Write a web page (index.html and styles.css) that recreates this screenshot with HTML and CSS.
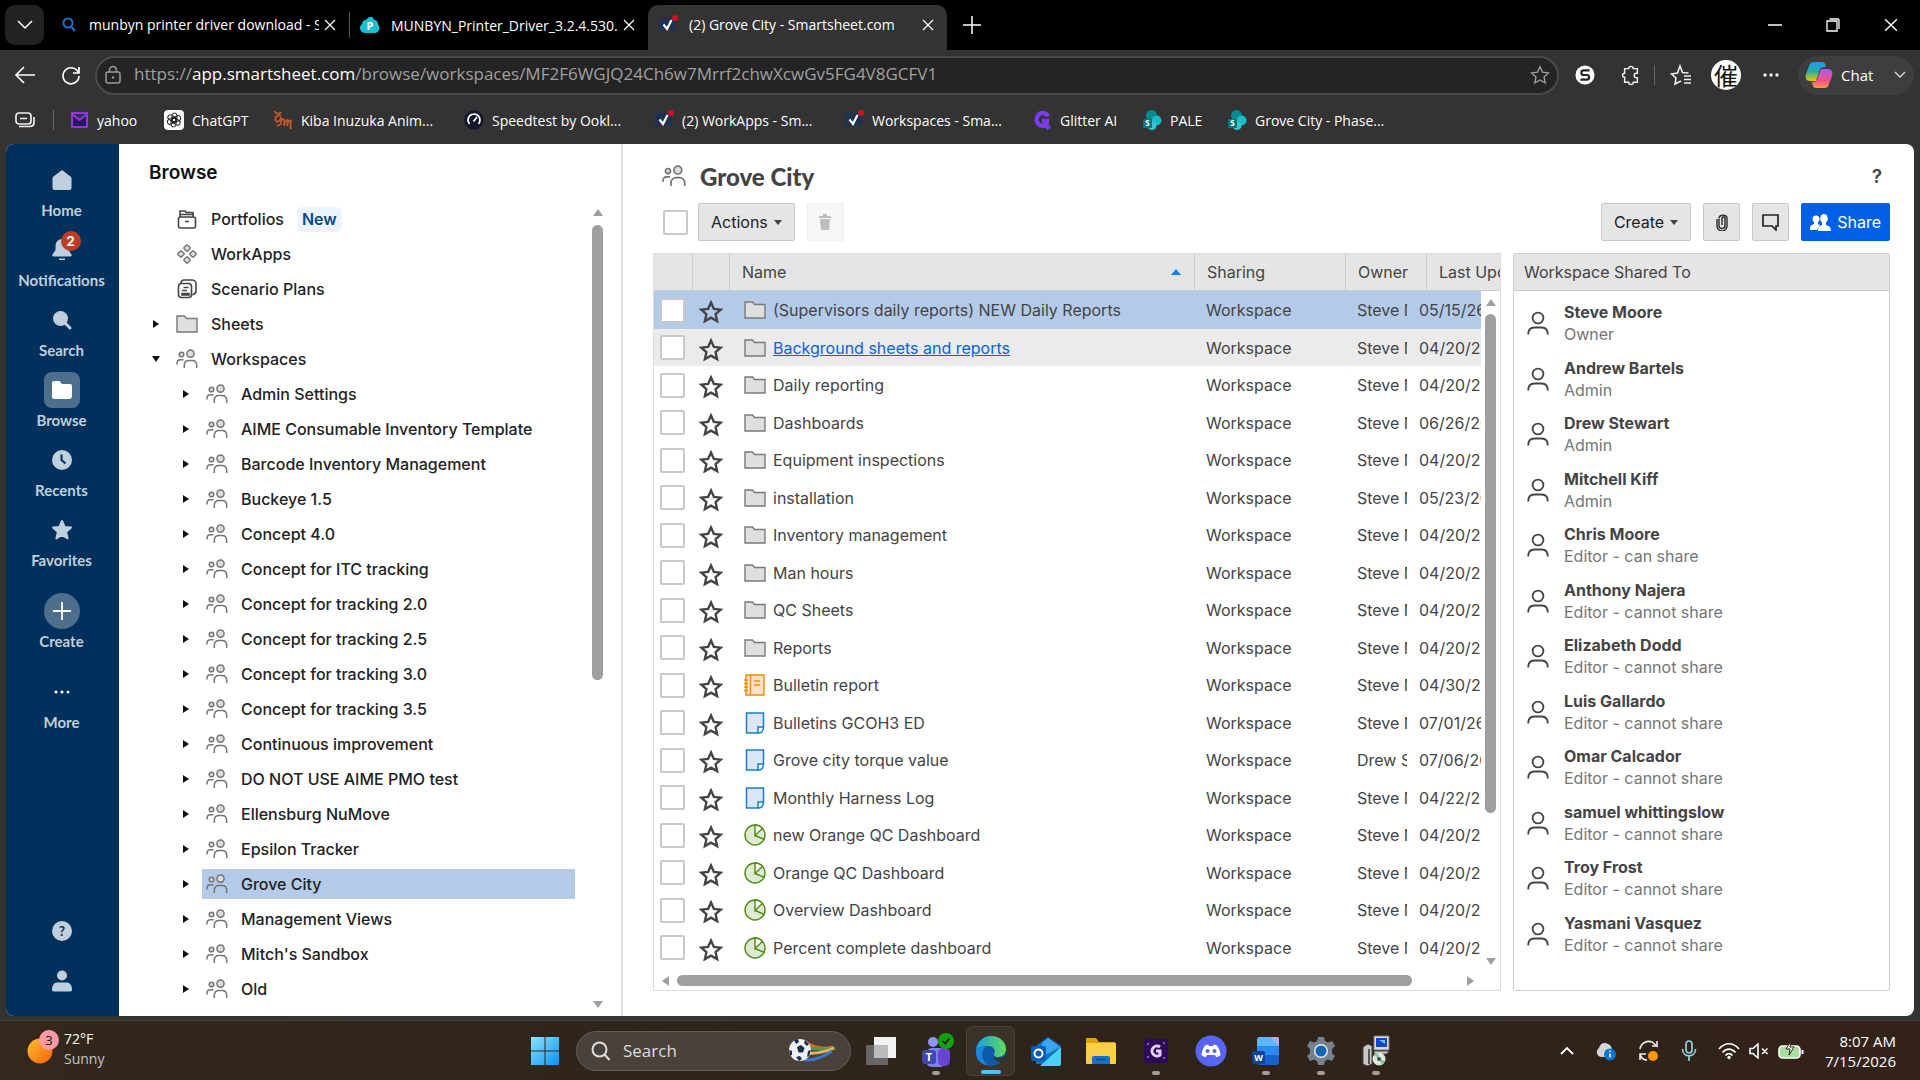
FILE: index.html
```html
<!DOCTYPE html>
<html lang="en">
<head>
  <meta charset="UTF-8" />
  <meta name="viewport" content="width=device-width, initial-scale=1" />
  <title>Grove City - Smartsheet.com</title>
  <link rel="stylesheet" href="styles.css">
</head>
<body>

  <!-- Shared icons -->
  <svg class="sprite" aria-hidden="true">
    <symbol id="i-people" viewBox="0 0 22 20">
      <g fill="#dcdcdc" stroke="#757575" stroke-width="1.5">
        <circle cx="5.5" cy="5.5" r="2.3"/><circle cx="14.5" cy="4.6" r="3.6"/>
        <path fill="none" d="M1 15.5v-1.200c0-2 1.500-3.500 3.500-3.500h3M8.300 19v-2.500c0-3 2-5 4.700-5h3c2.700 0 4.700 2 4.700 5V19"/>
      </g>
    </symbol>
    <symbol id="i-folder" viewBox="0 0 22 18">
      <path fill="#dfdfdf" stroke="#7a7a7a" stroke-width="1.4" d="M1 1h7.500l2 2.500H21V17H1z"/>
    </symbol>
    <symbol id="i-star" viewBox="0 0 24 24">
      <path fill="none" stroke="currentColor" stroke-width="2.400" d="M12 2.500l2.900 6.400 6.800.7-5.100 4.600 1.500 6.900L12 17.600l-6.100 3.500 1.500-6.900-5.100-4.600 6.800-.7z"/>
    </symbol>
    <symbol id="i-report" viewBox="0 0 22 22">
      <path fill="#fde3c3" stroke="#ee8a12" stroke-width="1.400" d="M2 1h18v20H2zM6.500 1v20"/>
      <path stroke="#ee8a12" stroke-width="1.400" d="M0 6h4M0 9.500h4M0 13h4M0 16.500h4M10 7h6M10 11h6"/>
    </symbol>
    <symbol id="i-sheet" viewBox="0 0 22 22">
      <path fill="#dbe6fb" stroke="#1780c8" stroke-width="1.500" d="M2.500 1h17v14l-5.500 6H2.500z"/>
      <path fill="#fff" stroke="#1780c8" stroke-width="1.500" d="M19.500 15h-5.500v6c3.500 0 5.500-2.500 5.500-6z"/>
    </symbol>
    <symbol id="i-dash" viewBox="0 0 22 22">
      <circle cx="11" cy="11" r="10" fill="#dfead3" stroke="#4b8a12" stroke-width="1.400"/>
      <path fill="#fff" stroke="#4b8a12" stroke-width="1.400" d="M11 1v10.500l7.500-7A10 10 0 0 0 11 1zM11 11.500l9.500 4"/>
    </symbol>
    <symbol id="i-user" viewBox="0 0 22 24">
      <g fill="none" stroke="#444" stroke-width="1.800"><circle cx="11" cy="7" r="5.400"/><path d="M1.200 23.500c0-4.500 2.300-7 6-7h7.600c3.700 0 6 2.500 6 7"/></g>
    </symbol>
    <symbol id="i-x" viewBox="0 0 12 12"><path fill="none" stroke="#fff" stroke-width="1.200" d="M1 1l10 10M11 1L1 11"/></symbol>
    <symbol id="i-smart" viewBox="0 0 20 20">
      <path fill="#1f3050" d="M1 3h17v14l-2-2H5l-4 5z"/>
      <path fill="none" stroke="#fff" stroke-width="2.200" d="M5.500 9.500l3.500 4.500 4.500-9"/><circle cx="17" cy="3" r="3" fill="#d0111f"/>
    </symbol>
    <symbol id="i-sp" viewBox="0 0 20 20">
      <circle cx="9.500" cy="5.500" r="5.500" fill="#078a92"/><circle cx="14.500" cy="10.500" r="5" fill="#1bbac4"/><circle cx="10" cy="15.500" r="4.500" fill="#37c6d0"/>
      <rect x="1" y="9" width="9" height="9" rx="1" fill="#04777f"/><text x="5.500" y="16" font-size="8" font-weight="700" fill="#fff" text-anchor="middle">S</text>
    </symbol>
  </svg>

  <!-- Browser tabs -->
  <header class="tabstrip">
    <button class="tab-menu" aria-label="Tab actions"><svg width="16" height="10" viewBox="0 0 16 10"><path fill="none" stroke="#fff" stroke-width="1.500" d="M1 1l7 7 7-7"/></svg></button>
    <div class="tab">
      <svg width="18" height="18" viewBox="0 0 18 18"><g fill="none" stroke="#1b76d2" stroke-width="2"><circle cx="8" cy="7" r="4.500"/><path d="M11 10.500l4 4.500"/></g></svg>
      <span class="tab-title">munbyn printer driver download - Search</span>
      <button class="tab-close" aria-label="Close tab"><svg width="12" height="12"><use href="#i-x"/></svg></button>
    </div>
    <div class="tab divided">
      <svg width="20" height="18" viewBox="0 0 20 18"><path fill="#18bfd0" d="M5 17a5 5 0 0 1-3-9C2 4 6 4 7 3c3-4 7-2 7 1 3 0 4 2 4 4 3 4 1 9-4 9z"/><text x="10" y="14" font-size="11" font-weight="700" fill="#fff" text-anchor="middle">P</text></svg>
      <span class="tab-title">MUNBYN_Printer_Driver_3.2.4.530.exe</span>
      <button class="tab-close" aria-label="Close tab"><svg width="12" height="12"><use href="#i-x"/></svg></button>
    </div>
    <div class="tab active">
      <svg width="20" height="20"><use href="#i-smart"/></svg>
      <span class="tab-title">(2) Grove City - Smartsheet.com</span>
      <button class="tab-close" aria-label="Close tab"><svg width="12" height="12"><use href="#i-x"/></svg></button>
    </div>
    <button class="tab-new" aria-label="New tab"><svg width="20" height="20" viewBox="0 0 20 20"><path stroke="#fff" stroke-width="1.500" d="M10 1v18M1 10h18"/></svg></button>
    <div class="win-controls">
      <button aria-label="Minimize"><svg width="14" height="14" viewBox="0 0 14 14"><path stroke="#fff" stroke-width="1.500" d="M0 7h14"/></svg></button>
      <button aria-label="Restore"><svg width="14" height="14" viewBox="0 0 14 14"><path fill="none" stroke="#fff" stroke-width="1.300" d="M1 3h10v10H1zM3.500 1H12q1 0 1 1v9"/></svg></button>
      <button aria-label="Close"><svg width="14" height="14" viewBox="0 0 12 12"><use href="#i-x"/></svg></button>
    </div>
  </header>

  <!-- Address bar -->
  <div class="toolbar">
    <button class="nav-btn" aria-label="Back"><svg width="22" height="18" viewBox="0 0 22 18"><path fill="none" stroke="#fff" stroke-width="1.700" d="M10 1L2 9l8 8M2 9h19"/></svg></button>
    <button class="nav-btn" aria-label="Refresh"><svg width="20" height="20" viewBox="0 0 20 20"><path fill="none" stroke="#fff" stroke-width="1.700" d="M17.500 8A8 8 0 1 0 18 11M18 2v6h-6"/></svg></button>
    <div class="address">
      <svg width="18" height="20" viewBox="0 0 18 20"><g fill="none" stroke="#9b9b9b" stroke-width="1.500"><rect x="2" y="7" width="14" height="11" rx="2"/><path d="M5.500 7V5a3.500 3.500 0 0 1 7 0v2"/></g><circle cx="9" cy="12.500" r="1.200" fill="#9b9b9b"/></svg>
      <span class="url">https://<b>app.smartsheet.com</b>/browse/workspaces/MF2F6WGJQ24Ch6w7Mrrf2chwXcwGv5FG4V8GCFV1</span>
      <svg width="20" height="20" viewBox="0 0 24 24"><path fill="none" stroke="currentColor" stroke-width="1.600" d="M12 2l3 6.700 7.200.8-5.400 4.900 1.500 7.200L12 18l-6.300 3.600 1.500-7.200-5.400-4.900L9 8.700z"/></svg>
    </div>
    <div class="ext">
      <button aria-label="Extension"><svg width="20" height="20" viewBox="0 0 22 22"><circle cx="11" cy="11" r="10.500" fill="#fff"/><path fill="none" stroke="#222" stroke-width="2.400" d="M16 6H9.500a2.500 2.500 0 0 0 0 5h3.500a2.500 2.500 0 0 1 0 5H6"/></svg></button>
      <button aria-label="Extensions"><svg width="20" height="20" viewBox="0 0 22 22"><path fill="none" stroke="#eee" stroke-width="1.600" d="M4 4h4.500a2.500 2.500 0 0 1 5 0H18v5h-1a2.200 2.200 0 0 0 0 5h1v5h-4.500a2.500 2.500 0 0 1-5 0H4v-5.500a2.200 2.200 0 0 1 0-4.500z"/></svg></button>
      <i class="ext-line"></i>
      <button aria-label="Favorites"><svg width="22" height="22" viewBox="0 0 22 22"><path fill="none" stroke="#eee" stroke-width="1.600" d="M11 17l-6 3 1-6-4.500-4 6-1L10 2l2.500 6.500 6 .5M14 12h7M14 15.500h7M14 19h7"/></svg></button>
      <button class="avatar" aria-label="Profile">催</button>
      <button aria-label="More"><svg width="18" height="6" viewBox="0 0 18 6"><g fill="#eee"><circle cx="3" cy="3" r="1.700"/><circle cx="9" cy="3" r="1.700"/><circle cx="15" cy="3" r="1.700"/></g></svg></button>
    </div>
    <button class="chat">
      <svg width="28" height="28" viewBox="0 0 28 28">
        <defs>
          <linearGradient id="cp1" x2="0" y2="1"><stop stop-color="#1b9bf5"/><stop offset=".5" stop-color="#25b0a0"/><stop offset="1" stop-color="#f5c400"/></linearGradient>
          <linearGradient id="cp2" x2="0" y2="1"><stop stop-color="#a75cf5"/><stop offset=".6" stop-color="#f5508a"/><stop offset="1" stop-color="#fb9a4a"/></linearGradient>
        </defs>
        <path fill="url(#cp1)" d="M9 1h8c3 0 3.500 3 4 5-5 0-6 1-7 5l-3 9H5c-4 0-5-3-4-7l3-8c1-3 2-4 5-4z"/>
        <path fill="url(#cp2)" d="M19 27h-8c-3 0-3.500-3-4-6 4 0 5-1 6-5l3-8h7c4 0 5 3 4 7l-3 8c-1 3-2 4-5 4z"/>
      </svg>
      <span>Chat</span>
      <svg width="12" height="8" viewBox="0 0 12 8"><path fill="none" stroke="#ddd" stroke-width="1.300" d="M1 1l5 5 5-5"/></svg>
    </button>
  </div>

  <!-- Bookmarks -->
  <nav class="bookmarks">
    <svg width="20" height="16" viewBox="0 0 20 16"><g fill="none" stroke="#eee" stroke-width="1.700"><rect x="1" y="1" width="15" height="11" rx="3"/><path d="M5 6.500h7M4 14.500h10c3 0 5-1 5-4V5"/></g></svg>
    <i class="bm-line"></i>
    <div class="bm-list">
      <a href="#"><svg width="18" height="16" viewBox="0 0 18 16"><path fill="#2b1760" stroke="#9333ea" stroke-width="2" d="M1 1h15v14H1zM1 2l7.500 6L16 2"/></svg>yahoo</a>
      <a href="#"><svg width="20" height="20" viewBox="0 0 20 20"><rect width="20" height="20" rx="4" fill="#fff"/><g fill="none" stroke="#222"><rect x="8" y="3" width="5" height="9" rx="2.500"/><rect x="8" y="3" width="5" height="9" rx="2.500" transform="rotate(60 10 10)"/><rect x="8" y="3" width="5" height="9" rx="2.500" transform="rotate(120 10 10)"/><rect x="8" y="3" width="5" height="9" rx="2.500" transform="rotate(180 10 10)"/><rect x="8" y="3" width="5" height="9" rx="2.500" transform="rotate(240 10 10)"/><rect x="8" y="3" width="5" height="9" rx="2.500" transform="rotate(300 10 10)"/></g></svg>ChatGPT</a>
      <a href="#"><svg width="20" height="20" viewBox="0 0 20 20"><path fill="none" stroke="#c0582c" stroke-width="1.800" d="M1 1c3 4 6 3 7 1M8 6C4 4 1 8 3 11c2 2 5-1 5-4v6c0 2-3 3-4 2M9 10c2-2 3 0 2 6 1-5 4-8 4-5l-1 5c1-5 5-8 4-3-1 4-1 6 1 5"/></svg>Kiba Inuzuka Anim...</a>
      <a href="#"><svg width="20" height="20" viewBox="0 0 20 20"><circle cx="10" cy="10" r="9.800" fill="#15162b"/><path fill="none" stroke="#fff" stroke-width="1.800" d="M5.500 14a6 6 0 1 1 9 0M9.500 11.500L13 7"/></svg>Speedtest by Ookl...</a>
      <a href="#"><svg width="20" height="20"><use href="#i-smart"/></svg>(2) WorkApps - Sm...</a>
      <a href="#"><svg width="20" height="20"><use href="#i-smart"/></svg>Workspaces - Sma...</a>
      <a href="#"><svg width="20" height="20" viewBox="0 0 20 20"><path fill="none" stroke="#7c3aed" stroke-width="4.500" d="M16 6.500A6 6.500 0 1 0 10 16c4 0 5-2 5-5h-5M13 13l4 6"/></svg>Glitter AI</a>
      <a href="#"><svg width="20" height="20"><use href="#i-sp"/></svg>PALE</a>
      <a href="#"><svg width="20" height="20"><use href="#i-sp"/></svg>Grove City - Phase...</a>
    </div>
  </nav>

  <!-- Page -->
  <main class="app">
    <nav class="rail">
      <a href="#"><span class="rail-icon"><svg width="22" height="22" viewBox="0 0 22 22"><path fill="currentColor" d="M11 1l8.500 6.500a3 3 0 0 1 1 2V19a2 2 0 0 1-2 2h-15a2 2 0 0 1-2-2V9.500a3 3 0 0 1 1-2z"/></svg></span>Home</a>
      <a href="#"><span class="rail-icon"><svg width="22" height="22" viewBox="0 0 22 22"><path fill="currentColor" d="M11 0a6.500 6.500 0 0 0-6.500 6.500V11l-3 4.500c-.6 1 0 2 1 2h17c1 0 1.600-1 1-2l-3-4.500V6.500A6.500 6.500 0 0 0 11 0zM8 19.500h6V21H8z"/></svg><b class="count">2</b></span>Notifications</a>
      <a href="#"><span class="rail-icon"><svg width="22" height="22" viewBox="0 0 22 22"><circle cx="9.500" cy="9.500" r="7.500" fill="currentColor"/><path stroke="currentColor" stroke-width="3" stroke-linecap="round" d="M14 14l5 5"/></svg></span>Search</a>
      <a href="#"><span class="rail-icon current"><svg width="22" height="22" viewBox="0 0 22 22"><path fill="#fff" d="M3 2h5.500l2.500 3h8a2 2 0 0 1 2 2v10a3 3 0 0 1-3 3H3a2 2 0 0 1-2-2V4a2 2 0 0 1 2-2z"/></svg></span>Browse</a>
      <a href="#"><span class="rail-icon"><svg width="22" height="22" viewBox="0 0 22 22"><circle cx="11" cy="11" r="10" fill="currentColor"/><path fill="none" stroke="#00305c" stroke-width="2" d="M10.500 5.500V11l4 3.500"/></svg></span>Recents</a>
      <a href="#"><span class="rail-icon"><svg width="24" height="24" viewBox="0 0 24 24"><path fill="currentColor" stroke="currentColor" stroke-width="2" stroke-linejoin="round" d="M12 3l2.600 6 6.400.6-4.900 4.300 1.500 6.600L12 17l-5.600 3.500 1.500-6.600L3 9.600 9.400 9z"/></svg></span>Favorites</a>
      <a href="#" class="rail-gap"><span class="rail-icon round"><svg width="18" height="18" viewBox="0 0 18 18"><path stroke="#fff" stroke-width="1.800" d="M9 0v18M0 9h18"/></svg></span>Create</a>
      <a href="#" class="rail-gap"><span class="rail-icon"><svg width="18" height="6" viewBox="0 0 18 6"><g fill="#fff"><circle cx="3" cy="3" r="1.500"/><circle cx="9" cy="3" r="1.500"/><circle cx="15" cy="3" r="1.500"/></g></svg></span>More</a>
      <div class="rail-bottom">
        <button aria-label="Help"><svg width="22" height="22" viewBox="0 0 22 22"><circle cx="11" cy="11" r="10" fill="currentColor"/><text x="11" y="16" font-size="13" font-weight="700" fill="#00305c" text-anchor="middle">?</text></svg></button>
        <button aria-label="Account"><svg width="20" height="22" viewBox="0 0 20 22"><circle cx="10" cy="5.500" r="5" fill="currentColor"/><path fill="currentColor" d="M0 20c0-5 2-7.500 6-7.500h8c4 0 6 2.500 6 7.500a2 2 0 0 1-2 1.500H2A2 2 0 0 1 0 20z"/></svg></button>
      </div>
    </nav>

    <aside class="browse">
      <h2>Browse</h2>
      <div class="browse-body">
        <ul class="tree">
          <li><i></i><a href="#"><svg width="22" height="20" viewBox="0 0 22 20"><g fill="none" stroke="#444" stroke-width="1.600"><rect x="2.500" y="8" width="17" height="11" rx="2"/><path d="M4 8V2h5l1 1.500h7V8M4 5.500h14M9 12.500h4"/></g></svg>Portfolios <span class="new">New</span></a></li>
          <li><i></i><a href="#"><svg width="22" height="22" viewBox="0 0 22 22"><g fill="#ddd" stroke="#757575" stroke-width="1.400"><rect x="8.500" y="2.500" width="5" height="5" rx="1" transform="rotate(45 11 5)"/><rect x="8.500" y="14.500" width="5" height="5" rx="1" transform="rotate(45 11 17)"/><rect x="2.500" y="8.500" width="5" height="5" rx="1" transform="rotate(45 5 11)"/><rect x="14.500" y="8.500" width="5" height="5" rx="1" transform="rotate(45 17 11)"/></g></svg>WorkApps</a></li>
          <li><i></i><a href="#"><svg width="22" height="20" viewBox="0 0 22 20"><g fill="none" stroke="#444" stroke-width="1.600"><rect x="2.500" y="4.500" width="13" height="14" rx="3"/><path d="M5 4c0-2 1-3 3-3h8c2 0 4 1.500 4 4v7c0 2-1 3-3.500 4M7.500 8.500h5M6 11.500h5M6 14.500h7v1.500H6z"/></g></svg>Scenario Plans</a></li>
          <li><i class="shut"></i><a href="#"><svg width="22" height="18"><use href="#i-folder"/></svg>Sheets</a></li>
          <li><i class="open"></i><a href="#"><svg width="22" height="20"><use href="#i-people"/></svg>Workspaces</a></li>
          <li class="sub"><i class="shut"></i><a href="#"><svg width="22" height="20"><use href="#i-people"/></svg>Admin Settings</a></li>
          <li class="sub"><i class="shut"></i><a href="#"><svg width="22" height="20"><use href="#i-people"/></svg>AIME Consumable Inventory Template</a></li>
          <li class="sub"><i class="shut"></i><a href="#"><svg width="22" height="20"><use href="#i-people"/></svg>Barcode Inventory Management</a></li>
          <li class="sub"><i class="shut"></i><a href="#"><svg width="22" height="20"><use href="#i-people"/></svg>Buckeye 1.5</a></li>
          <li class="sub"><i class="shut"></i><a href="#"><svg width="22" height="20"><use href="#i-people"/></svg>Concept 4.0</a></li>
          <li class="sub"><i class="shut"></i><a href="#"><svg width="22" height="20"><use href="#i-people"/></svg>Concept for ITC tracking</a></li>
          <li class="sub"><i class="shut"></i><a href="#"><svg width="22" height="20"><use href="#i-people"/></svg>Concept for tracking 2.0</a></li>
          <li class="sub"><i class="shut"></i><a href="#"><svg width="22" height="20"><use href="#i-people"/></svg>Concept for tracking 2.5</a></li>
          <li class="sub"><i class="shut"></i><a href="#"><svg width="22" height="20"><use href="#i-people"/></svg>Concept for tracking 3.0</a></li>
          <li class="sub"><i class="shut"></i><a href="#"><svg width="22" height="20"><use href="#i-people"/></svg>Concept for tracking 3.5</a></li>
          <li class="sub"><i class="shut"></i><a href="#"><svg width="22" height="20"><use href="#i-people"/></svg>Continuous improvement</a></li>
          <li class="sub"><i class="shut"></i><a href="#"><svg width="22" height="20"><use href="#i-people"/></svg>DO NOT USE AIME PMO test</a></li>
          <li class="sub"><i class="shut"></i><a href="#"><svg width="22" height="20"><use href="#i-people"/></svg>Ellensburg NuMove</a></li>
          <li class="sub"><i class="shut"></i><a href="#"><svg width="22" height="20"><use href="#i-people"/></svg>Epsilon Tracker</a></li>
          <li class="sub"><i class="shut"></i><a href="#" class="selected"><svg width="22" height="20"><use href="#i-people"/></svg>Grove City</a></li>
          <li class="sub"><i class="shut"></i><a href="#"><svg width="22" height="20"><use href="#i-people"/></svg>Management Views</a></li>
          <li class="sub"><i class="shut"></i><a href="#"><svg width="22" height="20"><use href="#i-people"/></svg>Mitch's Sandbox</a></li>
          <li class="sub"><i class="shut"></i><a href="#"><svg width="22" height="20"><use href="#i-people"/></svg>Old</a></li>
        </ul>
        <div class="vbar tree-bar"><i class="up"></i><div class="track"><div class="thumb"></div></div><i class="down"></i></div>
      </div>
    </aside>

    <section class="content">
      <div class="title">
        <svg width="26" height="22"><use href="#i-people"/></svg>
        <h1>Grove City</h1>
        <button class="help" aria-label="Help">?</button>
      </div>
      <div class="actions">
        <input type="checkbox" aria-label="Select all">
        <button class="btn">Actions <i class="caret"></i></button>
        <button class="btn icon off" aria-label="Delete" disabled><svg width="14" height="16" viewBox="0 0 14 16"><path fill="#bdbdbd" d="M1 2h4V0h4v2h4v2H1zM2 5h10l-1 11H3z"/></svg></button>
        <div class="actions-right">
          <button class="btn">Create <i class="caret"></i></button>
          <button class="btn icon" aria-label="Attachments"><svg width="12" height="17" viewBox="0 0 12 17"><path fill="none" stroke="#333" stroke-width="1.500" d="M3 5v6.500a2.500 2.500 0 0 0 6 0V4a1.700 1.700 0 0 0-3 0v7M1 5v7a4 4 0 0 0 10 0V4.500C11 0 3 0 3 4.500"/></svg></button>
          <button class="btn icon" aria-label="Conversations"><svg width="18" height="17" viewBox="0 0 18 17"><path fill="none" stroke="#222" stroke-width="1.700" d="M1 1h15v11h-2v4l-4-4H1z"/></svg></button>
          <button class="btn share"><svg width="21" height="17" viewBox="0 0 21 17"><g fill="#fff"><circle cx="6" cy="5" r="3.500"/><path d="M0 15c0-4 2-4 4-5V8h4v2l2 1-3 5H0z"/><ellipse cx="14" cy="4.500" rx="3.800" ry="4.500"/><path d="M8 17c0-4 2-5 4-6V8h4v3c3 1 5 2 5 6z"/></g></svg>Share</button>
        </div>
      </div>

      <div class="panes">
        <div class="grid">
          <table class="grid-head">
            <colgroup><col class="c-check"><col class="c-star"><col><col class="c-share"><col class="h-owner"><col class="h-date"></colgroup>
            <tr><th></th><th></th><th><span class="th-name">Name <i class="sort"></i></span></th><th>Sharing</th><th>Owner</th><th>Last Updated</th></tr>
          </table>
          <div class="grid-body">
            <table>
              <colgroup><col class="c-check"><col class="c-star"><col><col class="c-share"><col class="c-owner"><col class="c-date"></colgroup>
              <tr class="selected"><td><input type="checkbox" aria-label="Select row"></td><td><svg class="star"><use href="#i-star"/></svg></td><td><a href="#"><svg><use href="#i-folder"/></svg><span>(Supervisors daily reports) NEW Daily Reports</span></a></td><td>Workspace</td><td>Steve Moore</td><td>05/15/26</td></tr>
              <tr class="hover"><td><input type="checkbox" aria-label="Select row"></td><td><svg class="star"><use href="#i-star"/></svg></td><td><a href="#"><svg><use href="#i-folder"/></svg><span>Background sheets and reports</span></a></td><td>Workspace</td><td>Steve Moore</td><td>04/20/26</td></tr>
              <tr><td><input type="checkbox" aria-label="Select row"></td><td><svg class="star"><use href="#i-star"/></svg></td><td><a href="#"><svg><use href="#i-folder"/></svg><span>Daily reporting</span></a></td><td>Workspace</td><td>Steve Moore</td><td>04/20/26</td></tr>
              <tr><td><input type="checkbox" aria-label="Select row"></td><td><svg class="star"><use href="#i-star"/></svg></td><td><a href="#"><svg><use href="#i-folder"/></svg><span>Dashboards</span></a></td><td>Workspace</td><td>Steve Moore</td><td>06/26/26</td></tr>
              <tr><td><input type="checkbox" aria-label="Select row"></td><td><svg class="star"><use href="#i-star"/></svg></td><td><a href="#"><svg><use href="#i-folder"/></svg><span>Equipment inspections</span></a></td><td>Workspace</td><td>Steve Moore</td><td>04/20/26</td></tr>
              <tr><td><input type="checkbox" aria-label="Select row"></td><td><svg class="star"><use href="#i-star"/></svg></td><td><a href="#"><svg><use href="#i-folder"/></svg><span>installation</span></a></td><td>Workspace</td><td>Steve Moore</td><td>05/23/26</td></tr>
              <tr><td><input type="checkbox" aria-label="Select row"></td><td><svg class="star"><use href="#i-star"/></svg></td><td><a href="#"><svg><use href="#i-folder"/></svg><span>Inventory management</span></a></td><td>Workspace</td><td>Steve Moore</td><td>04/20/26</td></tr>
              <tr><td><input type="checkbox" aria-label="Select row"></td><td><svg class="star"><use href="#i-star"/></svg></td><td><a href="#"><svg><use href="#i-folder"/></svg><span>Man hours</span></a></td><td>Workspace</td><td>Steve Moore</td><td>04/20/26</td></tr>
              <tr><td><input type="checkbox" aria-label="Select row"></td><td><svg class="star"><use href="#i-star"/></svg></td><td><a href="#"><svg><use href="#i-folder"/></svg><span>QC Sheets</span></a></td><td>Workspace</td><td>Steve Moore</td><td>04/20/26</td></tr>
              <tr><td><input type="checkbox" aria-label="Select row"></td><td><svg class="star"><use href="#i-star"/></svg></td><td><a href="#"><svg><use href="#i-folder"/></svg><span>Reports</span></a></td><td>Workspace</td><td>Steve Moore</td><td>04/20/26</td></tr>
              <tr><td><input type="checkbox" aria-label="Select row"></td><td><svg class="star"><use href="#i-star"/></svg></td><td><a href="#"><svg><use href="#i-report"/></svg><span>Bulletin report</span></a></td><td>Workspace</td><td>Steve Moore</td><td>04/30/26</td></tr>
              <tr><td><input type="checkbox" aria-label="Select row"></td><td><svg class="star"><use href="#i-star"/></svg></td><td><a href="#"><svg><use href="#i-sheet"/></svg><span>Bulletins GCOH3 ED</span></a></td><td>Workspace</td><td>Steve Moore</td><td>07/01/26</td></tr>
              <tr><td><input type="checkbox" aria-label="Select row"></td><td><svg class="star"><use href="#i-star"/></svg></td><td><a href="#"><svg><use href="#i-sheet"/></svg><span>Grove city torque value</span></a></td><td>Workspace</td><td>Drew Stewart</td><td>07/06/26</td></tr>
              <tr><td><input type="checkbox" aria-label="Select row"></td><td><svg class="star"><use href="#i-star"/></svg></td><td><a href="#"><svg><use href="#i-sheet"/></svg><span>Monthly Harness Log</span></a></td><td>Workspace</td><td>Steve Moore</td><td>04/22/26</td></tr>
              <tr><td><input type="checkbox" aria-label="Select row"></td><td><svg class="star"><use href="#i-star"/></svg></td><td><a href="#"><svg><use href="#i-dash"/></svg><span>new Orange QC Dashboard</span></a></td><td>Workspace</td><td>Steve Moore</td><td>04/20/26</td></tr>
              <tr><td><input type="checkbox" aria-label="Select row"></td><td><svg class="star"><use href="#i-star"/></svg></td><td><a href="#"><svg><use href="#i-dash"/></svg><span>Orange QC Dashboard</span></a></td><td>Workspace</td><td>Steve Moore</td><td>04/20/26</td></tr>
              <tr><td><input type="checkbox" aria-label="Select row"></td><td><svg class="star"><use href="#i-star"/></svg></td><td><a href="#"><svg><use href="#i-dash"/></svg><span>Overview Dashboard</span></a></td><td>Workspace</td><td>Steve Moore</td><td>04/20/26</td></tr>
              <tr><td><input type="checkbox" aria-label="Select row"></td><td><svg class="star"><use href="#i-star"/></svg></td><td><a href="#"><svg><use href="#i-dash"/></svg><span>Percent complete dashboard</span></a></td><td>Workspace</td><td>Steve Moore</td><td>04/20/26</td></tr>
            </table>
            <div class="vbar grid-bar"><i class="up"></i><div class="track"><div class="thumb"></div></div><i class="down"></i></div>
          </div>
          <div class="hbar"><i class="left"></i><div class="track"><div class="thumb"></div></div><i class="right"></i></div>
        </div>

        <div class="shared">
          <h3>Workspace Shared To</h3>
          <ul>
            <li><svg><use href="#i-user"/></svg><p><b>Steve Moore</b>Owner</p></li>
            <li><svg><use href="#i-user"/></svg><p><b>Andrew Bartels</b>Admin</p></li>
            <li><svg><use href="#i-user"/></svg><p><b>Drew Stewart</b>Admin</p></li>
            <li><svg><use href="#i-user"/></svg><p><b>Mitchell Kiff</b>Admin</p></li>
            <li><svg><use href="#i-user"/></svg><p><b>Chris Moore</b>Editor - can share</p></li>
            <li><svg><use href="#i-user"/></svg><p><b>Anthony Najera</b>Editor - cannot share</p></li>
            <li><svg><use href="#i-user"/></svg><p><b>Elizabeth Dodd</b>Editor - cannot share</p></li>
            <li><svg><use href="#i-user"/></svg><p><b>Luis Gallardo</b>Editor - cannot share</p></li>
            <li><svg><use href="#i-user"/></svg><p><b>Omar Calcador</b>Editor - cannot share</p></li>
            <li><svg><use href="#i-user"/></svg><p><b>samuel whittingslow</b>Editor - cannot share</p></li>
            <li><svg><use href="#i-user"/></svg><p><b>Troy Frost</b>Editor - cannot share</p></li>
            <li><svg><use href="#i-user"/></svg><p><b>Yasmani Vasquez</b>Editor - cannot share</p></li>
          </ul>
        </div>
      </div>
    </section>
  </main>

  <!-- Taskbar -->
  <footer class="taskbar">
    <div class="weather">
      <svg width="34" height="38" viewBox="0 0 34 38">
        <defs><linearGradient id="sun" x2="1" y2="1"><stop stop-color="#fbc02d"/><stop offset="1" stop-color="#f4600c"/></linearGradient></defs>
        <circle cx="13" cy="22" r="12.500" fill="url(#sun)"/><circle cx="22" cy="11" r="10" fill="#ff99a4"/>
        <text x="22" y="16" font-size="13" fill="#111" text-anchor="middle">3</text>
      </svg>
      <p>72°F<span>Sunny</span></p>
    </div>
    <div class="dock">
      <button aria-label="Start"><svg width="30" height="30" viewBox="0 0 30 30"><defs><linearGradient id="win" x2="1" y2="1"><stop stop-color="#8ee3ff"/><stop offset="1" stop-color="#0a93f5"/></linearGradient></defs><path fill="url(#win)" d="M1 1h13.500v13.500H1zM15.500 1H29v13.500H15.500zM1 15.500h13.500V29H1zM15.500 15.500H29V29H15.500z"/></svg></button>
      <label class="search">
        <svg width="20" height="20" viewBox="0 0 20 20"><g fill="none" stroke="#ddd" stroke-width="2"><circle cx="8.500" cy="8.500" r="7"/><path d="M13.500 13.500l5 5.500"/></g></svg>
        <input type="text" placeholder="Search" aria-label="Search">
        <svg width="54" height="26" viewBox="0 0 54 26"><g fill="none" stroke-width="3"><path stroke="#e0662a" d="M18 4c10 6 18 8 28 5"/><path stroke="#4f9a4c" d="M19 9c10 3 18 3 29 1"/><path stroke="#e3b260" d="M20 15c10 1 18-1 27-5"/><path stroke="#3a78c8" d="M18 22c10 1 18-3 27-9"/></g><circle cx="13" cy="12" r="11" fill="#eef1f5"/><g fill="#1c2c50"><path d="M10 9l4-2 3.500 3-1.500 4.500h-4.500zM7 2l4-1 1 3-3 2zM18 2l4 4-2 2-3-3zM2 12l3 1v4l-2 .5zM21 13l3-1-2 6-2 1zM9 19l4-1 2 3-3 2z"/></g></svg>
      </label>
      <button aria-label="Task view"><svg width="32" height="30" viewBox="0 0 32 30"><path fill="#f2f2f2" d="M9 1h22v21H9z"/><path fill="#666" d="M1 9h8v13h14v7H1z"/><path fill="#bbb" d="M9 9h14v13H9z"/></svg></button>
      <button aria-label="Teams" class="running"><svg width="36" height="36" viewBox="0 0 36 36"><circle cx="15" cy="9" r="5" fill="#8e93f2"/><rect x="8" y="15" width="20" height="19" rx="6" fill="#7b83eb"/><rect x="20" y="15" width="12" height="18" rx="5" fill="#6a43d0"/><rect x="4" y="17" width="14" height="14" rx="3" fill="#4048b0"/><text x="11" y="28" font-size="11" font-weight="700" fill="#fff" text-anchor="middle">T</text><circle cx="28" cy="8" r="8" fill="#13a10e"/><path fill="none" stroke="#111" stroke-width="1.600" d="M24.500 8l2.500 2.500 4.500-5"/></svg></button>
      <button aria-label="Edge" class="focused"><svg width="32" height="32" viewBox="0 0 32 32"><defs><linearGradient id="edge" x2="1"><stop stop-color="#1b9de2"/><stop offset="1" stop-color="#62db5a"/></linearGradient></defs><circle cx="16" cy="16" r="15" fill="#0c5ba8"/><path fill="url(#edge)" d="M1 15C2 6 9 1 16 1c9 0 15 6 15 13 0 5-4 8-8 8-3 0-5-1-4-3 2-3 0-8-6-8C7 11 2 13 1 15z"/><path fill="#1a86d8" d="M1 15c2-3 6-4.500 10-3.500-5 3-6 14 3 19C6 30 0 24 1 15z"/><path fill="#3b322a" d="M19 18c-2 3 1 6 6 5 2-.5 4-1.500 7-3v8l-3-1c-5 1-14-3-10-9z"/></svg></button>
      <button aria-label="Outlook"><svg width="32" height="32" viewBox="0 0 32 32"><path fill="#1272c4" d="M6 11L18 2l13 9v18H6z"/><path fill="#3aa6ee" d="M12 8l6-5 12 9-18 10z"/><path fill="#4cd0f5" d="M31 12v17a2 2 0 0 1-2 2H10z"/><rect x="1" y="11" width="15" height="15" rx="2" fill="#0b5cb8"/><circle cx="8.500" cy="18.500" r="4" fill="none" stroke="#fff" stroke-width="2"/></svg></button>
      <button aria-label="File Explorer"><svg width="32" height="28" viewBox="0 0 32 28"><path fill="#e0a012" d="M1 1h10l3 4h16v8H1z"/><path fill="#fccf45" d="M1 6h30v20a1 1 0 0 1-1 1H2a1 1 0 0 1-1-1z"/><path fill="#1673c4" d="M7 27v-6a2 2 0 0 1 2-2h14a2 2 0 0 1 2 2v6z"/><path stroke="#0b4e8f" stroke-width="1.500" d="M11 22.500h10"/></svg></button>
      <button aria-label="Glitter AI" class="running"><svg width="24" height="24" viewBox="0 0 24 24"><rect width="24" height="24" rx="4" fill="#2c0a55"/><path fill="none" stroke="#e3d0ff" stroke-width="3" d="M16 8a5 5 0 1 0 0 8v-4h-4"/><g fill="#a46bff"><circle cx="4" cy="5" r="1"/><circle cx="20" cy="4" r="1"/><circle cx="20" cy="19" r="1"/><circle cx="4" cy="18" r="1"/></g></svg></button>
      <button aria-label="Discord"><svg width="32" height="32" viewBox="0 0 32 32"><circle cx="16" cy="16" r="15.500" fill="#5865f2"/><path fill="#fff" d="M10 10.500l3-1 1 1.500h4l1-1.500 3 1c2 3 3.500 6.500 3.500 9.500-1.500 1.500-3 2-4.500 2l-1-2h-8l-1 2c-1.500 0-3-.5-4.500-2 0-3 1.500-6.500 3.500-9.500z"/><circle cx="12.500" cy="16" r="2" fill="#5865f2"/><circle cx="19.500" cy="16" r="2" fill="#5865f2"/></svg></button>
      <button aria-label="Word" class="running"><svg width="30" height="30" viewBox="0 0 30 30"><rect x="6" y="1" width="22" height="28" rx="3" fill="#1663cf"/><path fill="#5cb8fb" d="M9 1h17a2 2 0 0 1 2 2v7H6V4a3 3 0 0 1 3-3z"/><path fill="#b9a7f5" d="M20 1h6a2 2 0 0 1 2 2v7z"/><path fill="#2b8cf0" d="M6 10h22v9H6z"/><rect x="1" y="15" width="13" height="13" rx="2" fill="#0d4596"/><text x="7.500" y="25" font-size="9" font-weight="700" fill="#fff" text-anchor="middle">W</text></svg></button>
      <button aria-label="Settings" class="running"><svg width="30" height="30" viewBox="0 0 30 30"><path fill="#77818c" d="M12 1h6l1 4 3 1.500 4-1.500 3 5-3 3v4l3 3-3 5-4-1.500-3 1.500-1 4h-6l-1-4-3-1.500L4 25l-3-5 3-3v-4l-3-3 3-5 4 1.500L11 5z"/><circle cx="15" cy="15" r="7" fill="#e4e8ee"/><circle cx="15" cy="15" r="5.500" fill="#1464b4"/></svg></button>
      <button aria-label="Installer" class="running"><svg width="30" height="32" viewBox="0 0 30 32"><path fill="#ddd" stroke="#777" d="M13 1h15v14H13z"/><path fill="#1443c8" d="M15 3h11v9H15z"/><path fill="#5cc8f5" d="M18 5h6v4z"/><path fill="#c9c9c9" stroke="#444" d="M2 12l5-3 4 2v18l-5 2-4-2zM13 16h15l-2 3H13z"/><path fill="#555" d="M7 14h2v15H7z"/><circle cx="18" cy="24" r="6.500" fill="#dfe8dc"/><path fill="#7ac5a5" d="M18 24l-5-4 4-2zM18 24l6 2-3 4z"/><circle cx="18" cy="24" r="2" fill="#445"/></svg></button>
    </div>
    <div class="tray">
      <svg width="14" height="10" viewBox="0 0 14 10"><path fill="none" stroke="#fff" stroke-width="1.800" d="M1 8l6-6 6 6"/></svg>
      <svg width="22" height="20" viewBox="0 0 22 20"><path fill="#d5d5d5" d="M6 16a5 5 0 0 1-2-9c1-5 6-6 9-4 3 1 4 4 4 6v7z"/><circle cx="15" cy="13.500" r="6" fill="#0b74d4"/><path stroke="#fff" stroke-width="1.500" d="M15 12.500v4M15 9.500V11"/></svg>
      <svg width="22" height="24" viewBox="0 0 22 24"><path fill="none" stroke="#eee" stroke-width="1.600" d="M2 10C3 4 9 1 14 3l5 4V2M19 7h-5M2 15c1 4 4 6 7 6M2 21v-6h6"/><circle cx="15" cy="17" r="5" fill="#ff980f"/></svg>
      <svg width="16" height="22" viewBox="0 0 16 22"><g fill="none" stroke="#8fd3de" stroke-width="1.700"><rect x="5" y="1" width="6" height="12" rx="3"/><path d="M1.500 9c0 9 13 9 13 0M8 16v5"/></g></svg>
      <div class="status">
        <svg width="22" height="18" viewBox="0 0 22 18"><g fill="none" stroke="#fff" stroke-width="1.700"><path d="M1 7c6-7 14-7 20 0M4.500 10.500c4-4.500 9-4.500 13 0M7.500 13.500c2-2.500 5-2.500 7 0"/></g><circle cx="11" cy="15.500" r="1.700" fill="#fff"/></svg>
        <svg width="20" height="16" viewBox="0 0 20 16"><path fill="none" stroke="#fff" stroke-width="1.600" d="M1 5.500h3L9 1v14l-5-4.500H1zM13 5.500l5.500 5.500M18.500 5.500L13 11"/></svg>
        <svg width="26" height="20" viewBox="0 0 26 20"><rect x="1" y="5" width="21" height="12" rx="3.500" fill="#a8dd9c" stroke="#fff" stroke-width="1.600"/><path stroke="#fff" stroke-width="2" d="M24.500 9v4"/><path fill="#fff" stroke="#2f251a" d="M13 0L8 8h4l-1 6 5-8h-4z"/></svg>
      </div>
      <p class="clock">8:07 AM<br>7/15/2026</p>
    </div>
  </footer>
</body>
</html>
```
FILE: styles.css
```css
/* Basic reset */
* {
  margin: 0;
  padding: 0;
  box-sizing: border-box;
}

body {
  height: 100vh;
  display: flex;
  flex-direction: column;
  overflow: hidden;
  background: #333;
  color: #fff;
  font-family: "Open Sans", "Noto Sans", sans-serif;
  font-size: 14px;
}

button {
  background: none;
  border: none;
  color: inherit;
  font: inherit;
  display: flex;
  align-items: center;
  justify-content: center;
}

a {
  color: inherit;
  text-decoration: none;
}

ul {
  list-style: none;
}

svg {
  display: block;
  flex: none;
}

.sprite {
  position: absolute;
  width: 0;
  height: 0;
}

/* Tab strip */
.tabstrip {
  height: 50px;
  flex: none;
  display: flex;
  background: #000;
  padding-left: 5px;
}

.tab-menu {
  width: 39px;
  height: 40px;
  margin: 5px 6px 0 0;
  border-radius: 10px;
  background: #222;
}

.tab {
  width: 299px;
  height: 45px;
  margin-top: 5px;
  padding: 0 12px 6px 10px;
  display: flex;
  align-items: center;
}

.tab-title {
  flex: 1;
  margin: 0 4px 0 11px;
  overflow: hidden;
  white-space: nowrap;
}

.divided {
  border-left: 1px solid #555;
  height: 26px;
  margin-top: 12px;
  padding-bottom: 0;
}

.active {
  background: #333;
  border-radius: 10px 10px 0 0;
}

.tab-close {
  width: 14px;
  height: 22px;
}

.tab-new {
  width: 50px;
}

.win-controls {
  margin-left: auto;
  display: flex;
}

.win-controls button {
  width: 58px;
}

/* Address bar */
.toolbar {
  height: 50px;
  flex: none;
  display: flex;
  align-items: center;
  padding: 0 6px 0 2px;
}

.nav-btn {
  width: 46px;
  height: 40px;
}

.address {
  flex: 1;
  height: 39px;
  margin-left: 1px;
  padding: 0 7px;
  display: flex;
  align-items: center;
  gap: 12px;
  border: 2px solid #4a4a4a;
  border-radius: 20px;
  background: #242424;
  color: #a0a0a0;
}

.url {
  flex: 1;
  font-size: 17px;
  line-height: 22px;
  padding-bottom: 2px;
  white-space: nowrap;
}

.url b {
  font-weight: 400;
  color: #fff;
}

.ext {
  display: flex;
  align-items: center;
  padding: 0 4px 0 3px;
}

.ext button {
  width: 46px;
  height: 40px;
}

.ext-line {
  width: 1px;
  height: 20px;
  margin-right: 3px;
  background: #666;
}

.ext .avatar {
  width: 30px;
  height: 30px;
  margin: 0 7px;
  border-radius: 50%;
  background: #fff;
  color: #111;
  font-family: "Noto Sans CJK JP", sans-serif;
  font-size: 24px;
  line-height: 30px;
  overflow: hidden;
}

.chat {
  width: 116px;
  height: 39px;
  border-radius: 20px;
  background: #3e3e3e;
  justify-content: space-between;
  padding: 0 8px 0 7px;
  font-size: 15px;
}

.chat span {
  flex: 1;
  text-align: left;
  padding-left: 8px;
}

/* Bookmarks */
.bookmarks {
  height: 44px;
  flex: none;
  display: flex;
  align-items: center;
  padding: 0 0 4px 15px;
}

.bm-line {
  width: 1px;
  height: 20px;
  margin: 0 17px 0 18px;
  background: #666;
}

.bm-list {
  flex: 1;
  display: grid;
  grid-template-columns: 93px 109px 191px 190px 190px 188px 110px 85px auto;
}

.bm-list a {
  display: flex;
  align-items: center;
  gap: 8px;
  white-space: nowrap;
}

/* App frame */
.app {
  flex: 1;
  min-height: 0;
  margin: 0 6px;
  display: flex;
  background: #fff;
  border-radius: 8px;
  overflow: hidden;
  color: #222;
  font-family: Inter, "Liberation Sans", sans-serif;
  font-size: 16px;
}

.rail {
  width: 113px;
  flex: none;
  display: flex;
  flex-direction: column;
  padding: 15px 2px 0 0;
  background: #00305c;
  color: #bfcfdd;
  font-family: Lato, sans-serif;
  font-size: 15px;
  font-weight: 700;
}

.rail a {
  height: 70px;
  display: flex;
  flex-direction: column;
  align-items: center;
  line-height: 20px;
}

.rail-icon {
  position: relative;
  width: 36px;
  height: 36px;
  margin: 3px 0 2px;
  display: flex;
  align-items: center;
  justify-content: center;
}

.current {
  border-radius: 8px;
  background: #4d6e8d;
}

.round {
  border-radius: 50%;
  background: #4d6e8d;
}

.rail .rail-gap {
  margin-top: 11px;
}

.count {
  position: absolute;
  top: -1px;
  right: -1px;
  width: 20px;
  height: 20px;
  border-radius: 50%;
  background: #bf3c24;
  color: #fff;
  font: 700 13px/20px Inter, sans-serif;
  text-align: center;
}

.rail-bottom {
  margin-top: auto;
  padding-bottom: 22px;
  display: flex;
  flex-direction: column;
  align-items: center;
  gap: 24px;
}

.rail-bottom button {
  height: 26px;
}

/* Browse tree */
.browse {
  width: 504px;
  flex: none;
  display: flex;
  flex-direction: column;
  border-right: 2px solid #e0e0e0;
}

.browse h2 {
  padding: 16px 0 0 30px;
  font-size: 19px;
  font-weight: 600;
  line-height: 26px;
  color: #111;
}

.browse-body {
  flex: 1;
  min-height: 0;
  margin-top: 18px;
  display: flex;
  justify-content: space-between;
}

.tree {
  flex: 1;
  overflow: hidden;
  font-weight: 500;
}

.tree li {
  height: 30px;
  margin-bottom: 5px;
  padding-left: 31px;
  display: flex;
  align-items: center;
}

.tree .sub {
  padding-left: 61px;
}

.tree i {
  width: 12px;
  margin-right: 10px;
}

.tree i::before {
  content: '';
  display: block;
  width: 0;
  margin-left: 3px;
}

.tree .shut::before {
  border: 4px solid transparent;
  border-left: 6px solid #111;
  border-right: 0;
}

.tree .open::before {
  margin-left: 2px;
  border: 4px solid transparent;
  border-top: 6px solid #111;
  border-bottom: 0;
}

.tree a {
  flex: 1;
  height: 30px;
  padding-left: 4px;
  display: flex;
  align-items: center;
  gap: 13px;
  white-space: nowrap;
}

.tree .selected {
  background: #b3cbe9;
}

.new {
  padding: 0 5px;
  border-radius: 6px;
  background: #edf3fc;
  color: #0b4a85;
  font-weight: 600;
  line-height: 25px;
}

/* Scrollbars */
.vbar {
  display: flex;
  flex-direction: column;
  align-items: center;
}

.track {
  flex: 1;
}

.thumb {
  border-radius: 6px;
  background: #9f9f9f;
}

.up,
.down,
.left,
.right {
  border: 5px solid transparent;
}

.up {
  border-top: 0;
  border-bottom: 7px solid #9f9f9f;
}

.down {
  border-bottom: 0;
  border-top: 7px solid #9f9f9f;
}

.left {
  border-left: 0;
  border-right: 7px solid #9f9f9f;
}

.right {
  border-right: 0;
  border-left: 7px solid #9f9f9f;
}

.tree-bar {
  margin: 5px 18px 8px 17px;
}

.tree-bar .track {
  margin: 9px 0 4px;
}

.tree-bar .thumb {
  width: 11px;
  height: 59%;
}

/* Content */
.content {
  flex: 1;
  min-width: 0;
  display: flex;
  flex-direction: column;
  padding: 16px 24px 25px 30px;
  color: #444;
}

.title {
  height: 32px;
  display: flex;
  align-items: center;
  gap: 13px;
  padding: 0 8px;
}

h1 {
  font-family: Lato, sans-serif;
  font-size: 24px;
  font-weight: 900;
}

.help {
  margin-left: auto;
  font-size: 19px;
  font-weight: 600;
}

.actions {
  height: 38px;
  margin: 11px 0 12px;
  display: flex;
  align-items: center;
  padding-left: 10px;
}

input[type="checkbox"] {
  appearance: none;
  display: block;
  width: 25px;
  height: 25px;
  border: 2px solid #c9c9c9;
  border-radius: 2px;
  background: #fff;
}

.btn {
  height: 38px;
  padding: 0 12px;
  gap: 6px;
  border: 1px solid #c8c8c8;
  border-radius: 2px;
  background: #e5e5e5;
  color: #222;
}

.actions > .btn {
  margin-left: 10px;
}

.icon {
  width: 37px;
  padding: 0;
}

.actions > .off {
  margin-left: 12px;
  border-color: #eee;
  background: #f7f7f7;
}

.caret {
  border: 4px solid transparent;
  border-top: 5px solid #444;
  border-bottom: 0;
}

.share {
  padding: 0 8px;
  border-color: #0060e5;
  background: #0060e5;
  color: #fff;
}

.actions-right {
  margin-left: auto;
  display: flex;
  gap: 12px;
}

.panes {
  flex: 1;
  min-height: 0;
  display: flex;
  gap: 12px;
}

.grid {
  flex: 1;
  min-width: 0;
  display: flex;
  flex-direction: column;
  border: 1px solid #ddd;
}

table {
  width: 100%;
  table-layout: fixed;
  border-spacing: 0;
}

.c-check { width: 38px; }
.c-star { width: 37px; }
.c-share { width: 151px; }
.c-owner { width: 62px; }
.c-date { width: 74px; }
.h-owner { width: 81px; }
.h-date { width: 74px; }

.grid-head th {
  height: 37px;
  padding-left: 12px;
  border-left: 1px solid #cdcdcd;
  border-bottom: 1px solid #cdcdcd;
  background: #e5e5e5;
  font-weight: 400;
  text-align: left;
  white-space: nowrap;
  overflow: hidden;
}

.grid-head th:first-child {
  border-left: 0;
}

.th-name {
  display: flex;
  align-items: center;
  justify-content: space-between;
  padding-right: 13px;
}

.sort {
  border: 5px solid transparent;
  border-top: 0;
  border-bottom: 6px solid #0a84ef;
}

.grid-body {
  flex: 1;
  min-height: 0;
  display: flex;
  align-items: flex-start;
}

.grid-body td {
  height: 37px;
  padding-left: 12px;
  white-space: nowrap;
  overflow: hidden;
}

.grid-body tr:nth-child(odd) td {
  height: 38px;
}

.grid-body td:first-child {
  padding-left: 6px;
}

.grid-body td:nth-child(2) {
  padding: 4px 0 0 7px;
}

.grid-body td:nth-child(3) {
  padding-left: 15px;
}

.grid-body td a {
  display: flex;
  align-items: center;
  gap: 7px;
}

.grid-body td a svg {
  width: 22px;
  height: 22px;
}

.star {
  width: 24px;
  height: 24px;
}

.grid-body .selected {
  background: #b3cbe9;
}

.grid-body .hover {
  background: #ebebeb;
}

.hover a span {
  color: #0a62dc;
  text-decoration: underline;
}

.grid-bar {
  align-self: stretch;
  width: 19px;
  flex: none;
  padding: 8px 0 6px;
}

.grid-bar .track {
  margin: 8px 0 4px;
}

.grid-bar .thumb {
  width: 11px;
  height: 78%;
}

.hbar {
  height: 19px;
  display: flex;
  align-items: center;
  padding: 0 26px 0 8px;
}

.hbar .track {
  margin: 0 8px;
}

.hbar .thumb {
  width: 94%;
  height: 11px;
}

/* People with access */
.shared {
  width: 377px;
  flex: none;
  border: 1px solid #cfcfcf;
  border-radius: 2px;
}

.shared h3 {
  height: 37px;
  padding-left: 10px;
  border-bottom: 1px solid #cdcdcd;
  background: #e5e5e5;
  font-size: 16px;
  font-weight: 400;
  line-height: 37px;
}

.shared ul {
  padding-top: 4px;
}

.shared li {
  height: 55px;
  display: flex;
  align-items: center;
  gap: 15px;
  padding-left: 13px;
}

.shared li:nth-child(odd) {
  height: 56px;
}

.shared svg {
  width: 22px;
  height: 24px;
}

.shared p {
  color: #757575;
  line-height: 22px;
}

.shared b {
  display: block;
  color: #444;
  font-weight: 700;
}

/* Taskbar */
.taskbar {
  height: 60px;
  margin-top: 4px;
  flex: none;
  display: grid;
  grid-template-columns: 1fr auto 1fr;
  border-top: 1px solid #4a4038;
  background: linear-gradient(90deg, #34271b, #2d241b 50%, #33221a);
}

.weather {
  display: flex;
  gap: 3px;
  padding: 8px 0 0 27px;
  line-height: 20px;
}

.weather span {
  display: block;
  color: #c8c4c0;
}

.dock {
  display: flex;
  align-items: center;
}

.dock button {
  position: relative;
  width: 49px;
  height: 50px;
  margin: 0 3px;
}

.focused {
  border: 1px solid #4a4038;
  border-radius: 6px;
  background: #3b322a;
}

.running::after,
.focused::after {
  content: '';
  position: absolute;
  bottom: 1px;
  left: 50%;
  width: 8px;
  height: 4px;
  margin-left: -4px;
  border-radius: 2px;
  background: #a39d97;
}

.focused::after {
  width: 20px;
  margin-left: -10px;
  background: #4cc2ff;
}

.search {
  width: 275px;
  height: 40px;
  margin: 0 2px 0 4px;
  padding: 0 9px 0 14px;
  display: flex;
  align-items: center;
  gap: 12px;
  border: 1px solid #655c56;
  border-radius: 20px;
  background: #4b413b;
}

.search input {
  flex: 1;
  min-width: 0;
  border: none;
  background: none;
  color: #ddd;
  font: 17px "Open Sans", sans-serif;
}

.search input::placeholder {
  color: #ddd;
}

.tray {
  display: flex;
  align-items: center;
  justify-content: flex-end;
  gap: 21px;
  padding-right: 24px;
}

.status {
  display: flex;
  align-items: center;
  gap: 9px;
}

.clock {
  text-align: right;
  font-size: 15px;
  line-height: 20px;
}
```
